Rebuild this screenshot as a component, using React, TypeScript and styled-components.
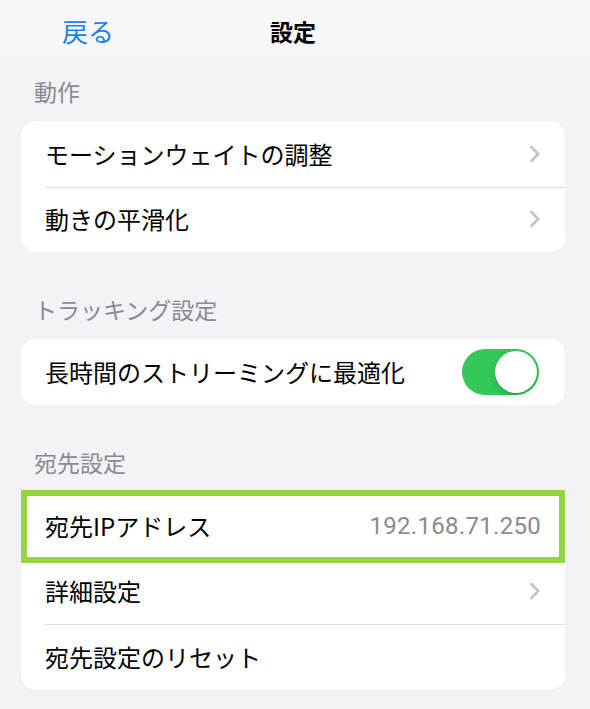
import React, { useState } from "react";
import styled, { createGlobalStyle } from "styled-components";

const GlobalStyle = createGlobalStyle`
  html, body {
    margin: 0;
    padding: 0;
    background: #f2f2f7;
  }
  body {
    font-family: "Noto Sans CJK JP", "Noto Sans", sans-serif;
    -webkit-font-smoothing: antialiased;
  }
  * { box-sizing: border-box; }
`;

const Screen = styled.div`
  width: 590px;
  min-height: 709px;
  background: #f2f2f7;
  display: flex;
  flex-direction: column;
`;

const NavBar = styled.header`
  height: 62px;
  background: #f7f7f7;
  display: grid;
  grid-template-columns: 1fr auto 1fr;
  align-items: center;
  padding: 0 0 0 62px;
`;

const BackButton = styled.button`
  justify-self: start;
  border: none;
  background: none;
  padding: 0;
  margin: 0;
  font-family: "Noto Sans CJK JP", sans-serif;
  font-size: 26px;
  line-height: 30px;
  color: #1c80f6;
  cursor: pointer;
`;

const Title = styled.h1`
  margin: 0;
  font-size: 23px;
  line-height: 30px;
  font-weight: 700;
  color: #000;
  transform: translateX(-33px);
`;

const Content = styled.main`
  display: flex;
  flex-direction: column;
  padding: 0 25px 0 21px;
`;

const Section = styled.section<{ $first?: boolean }>`
  display: flex;
  flex-direction: column;
  margin-top: ${(p) => (p.$first ? "15px" : "43px")};
`;

const SectionHeader = styled.h2`
  margin: 0 0 16px 13px;
  font-size: 23px;
  line-height: 28px;
  font-weight: 400;
  color: #8a8a8e;
`;

const Card = styled.div`
  background: #fff;
  border-radius: 15px;
  display: flex;
  flex-direction: column;
`;

const Row = styled.div<{ $separator?: boolean }>`
  position: relative;
  height: 65.5px;
  display: flex;
  align-items: center;
  justify-content: space-between;
  padding: 0 24px;
  &::before {
    content: "";
    display: ${(p) => (p.$separator ? "block" : "none")};
    position: absolute;
    top: 0;
    left: 24px;
    right: 0;
    height: 1px;
    background: #dedee1;
  }
`;

const HighlightRow = styled.div`
  position: relative;
  z-index: 1;
  height: 73px;
  margin: -2px 0 -4px;
  border: 6px solid #93d542;
  display: flex;
  align-items: center;
  justify-content: space-between;
  padding: 0 18px 0 18px;
`;

const Label = styled.span`
  font-size: 24px;
  line-height: 30px;
  color: #000;
`;

const Value = styled.span`
  font-family: Roboto, "Liberation Sans", sans-serif;
  font-size: 24px;
  line-height: 30px;
  letter-spacing: 0.3px;
  color: #8a8a8e;
`;

const SwitchTrack = styled.button<{ $on: boolean }>`
  position: relative;
  width: 77px;
  height: 46px;
  border-radius: 23px;
  border: none;
  padding: 0;
  margin-right: 2px;
  background: ${(p) => (p.$on ? "#34c759" : "#e9e9eb")};
  cursor: pointer;
`;

const SwitchKnob = styled.span<{ $on: boolean }>`
  position: absolute;
  top: 2px;
  left: ${(p) => (p.$on ? "33px" : "2px")};
  width: 42px;
  height: 42px;
  border-radius: 50%;
  background: #fff;
  box-shadow: 0 3px 8px rgba(0, 0, 0, 0.15), 0 1px 1px rgba(0, 0, 0, 0.16);
`;

const Chevron = () => (
  <svg width="12" height="18" viewBox="0 0 12 18" aria-hidden="true">
    <path
      d="M2.4 2 L9.2 9 L2.4 16"
      fill="none"
      stroke="#c4c4c7"
      strokeWidth="2.6"
      strokeLinecap="round"
      strokeLinejoin="round"
    />
  </svg>
);

export default function App() {
  const [on, setOn] = useState(true);
  return (
    <Screen>
      <GlobalStyle />
      <NavBar>
        <BackButton>戻る</BackButton>
        <Title>設定</Title>
        <span />
      </NavBar>
      <Content>
        <Section $first>
          <SectionHeader>動作</SectionHeader>
          <Card>
            <Row>
              <Label>モーションウェイトの調整</Label>
              <Chevron />
            </Row>
            <Row $separator>
              <Label>動きの平滑化</Label>
              <Chevron />
            </Row>
          </Card>
        </Section>
        <Section>
          <SectionHeader>トラッキング設定</SectionHeader>
          <Card>
            <Row>
              <Label>長時間のストリーミングに最適化</Label>
              <SwitchTrack
                role="switch"
                aria-checked={on}
                $on={on}
                onClick={() => setOn(!on)}
              >
                <SwitchKnob $on={on} />
              </SwitchTrack>
            </Row>
          </Card>
        </Section>
        <Section>
          <SectionHeader>宛先設定</SectionHeader>
          <Card>
            <HighlightRow>
              <Label>宛先IPアドレス</Label>
              <Value>192.168.71.250</Value>
            </HighlightRow>
            <Row>
              <Label>詳細設定</Label>
              <Chevron />
            </Row>
            <Row $separator>
              <Label>宛先設定のリセット</Label>
            </Row>
          </Card>
        </Section>
      </Content>
    </Screen>
  );
}
